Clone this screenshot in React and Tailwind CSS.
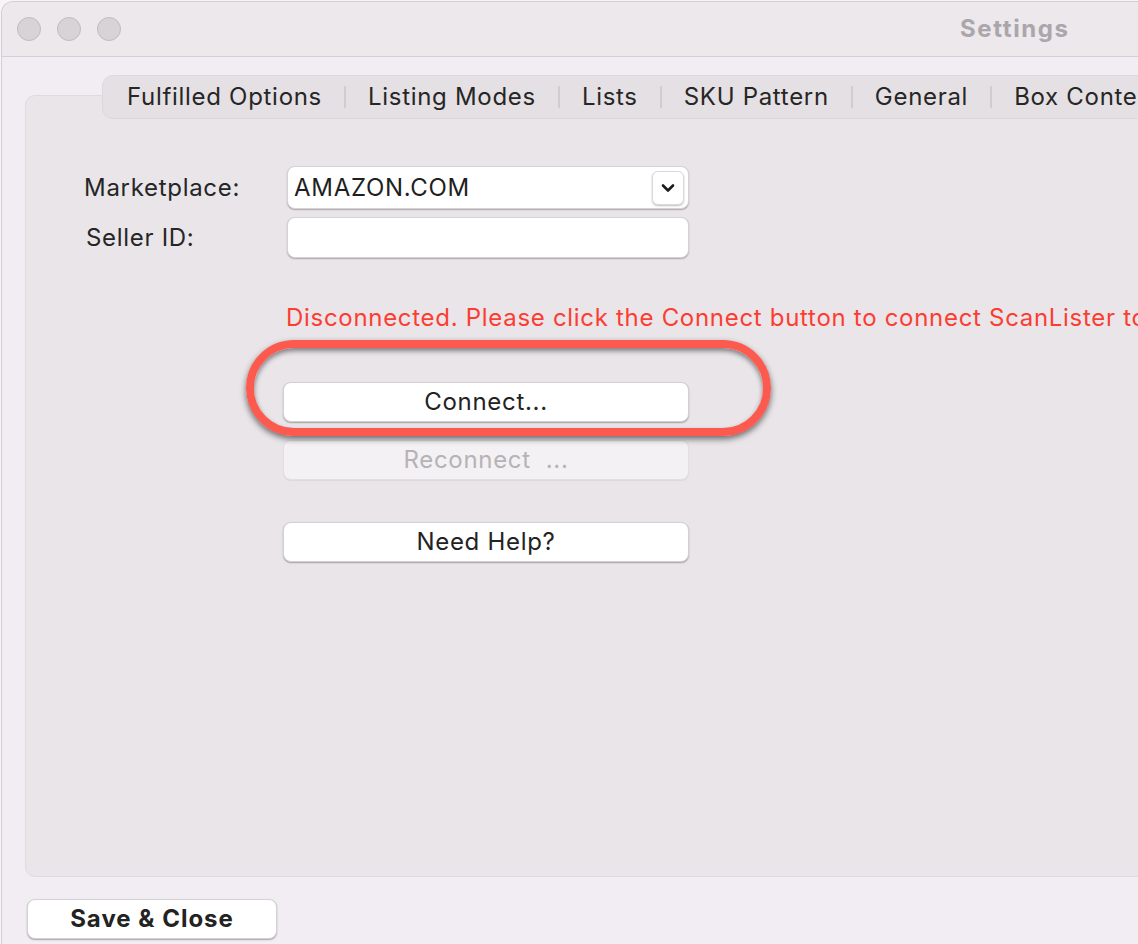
const tabs = ['Fulfilled Options', 'Listing Modes', 'Lists', 'SKU Pattern', 'General', 'Box Contents'];

const font = { fontFamily: 'Inter, "Noto Sans", sans-serif' };

const MacButton = ({ children, disabled, bold, className = '' }) => (
  <button
    className={`flex h-[40px] items-center justify-center rounded-[8px] border-[0.5px] text-[24px] ${
      disabled
        ? 'border-[#e2dfe2] bg-[#f3f1f3] text-[#b6b3b6] shadow-[0_1px_1px_rgba(0,0,0,0.06)]'
        : 'border-[#d4d1d4] bg-white text-[#232323] shadow-[0_1px_1.5px_rgba(0,0,0,0.3)]'
    } ${bold ? 'font-bold tracking-[1px]' : ''} ${className}`}
  >
    {children}
  </button>
);

const Chevron = () => (
  <svg width="14" height="10" viewBox="0 0 14 10" fill="none">
    <path d="M2 2.5 L7 7.5 L12 2.5" stroke="#1d1d1d" strokeWidth="2.6" strokeLinecap="round" strokeLinejoin="round" />
  </svg>
);

export default function App() {
  return (
    <div className="h-[944px] w-[1138px] overflow-hidden bg-[#f7f5f7] tracking-[0.7px]" style={font}>
      <div className="ml-[1px] mt-[1px] h-[960px] w-[1300px] rounded-tl-[12px] border-l border-t border-[#d2ced2] bg-[#f1edf2]">
        {/* title bar */}
        <div className="flex h-[55px] items-center rounded-tl-[12px] border-b border-[#d4d0d4] bg-[#ece8ec] pl-[15px]">
          <div className="flex gap-[16px]">
            <span className="h-[24px] w-[24px] rounded-full border border-[#bfbbbf] bg-[#d7d3d7]" />
            <span className="h-[24px] w-[24px] rounded-full border border-[#bfbbbf] bg-[#d7d3d7]" />
            <span className="h-[24px] w-[24px] rounded-full border border-[#bfbbbf] bg-[#d7d3d7]" />
          </div>
          <span className="ml-[839px] text-[24px] font-bold tracking-[1.6px] text-[#aaa6ab]">Settings</span>
        </div>

        <div className="flex flex-col pl-[23px] pt-[18px]">
          {/* tab strip */}
          <div className="relative z-10 ml-[77px] flex h-[44px] w-[1200px] items-center rounded-l-[11px] border border-[#dcd8dc] bg-[#e4e0e4] pl-[2px] text-[24px] text-[#262626]">
            {tabs.map((t, i) => (
              <div key={t} className="flex items-center">
                {i > 0 && <span className="h-[22px] w-[2px] bg-[#d0ccd0]" />}
                <span className="px-[22px] whitespace-nowrap">{t}</span>
              </div>
            ))}
          </div>

          {/* tab panel */}
          <div className="-mt-[24px] h-[782px] w-[1200px] rounded-[10px] border border-[#dedade] bg-[#e9e5e9] pl-[58px] pt-[70px]">
            <div className="flex flex-col gap-[8px]">
              <div className="flex items-center">
                <span className="w-[203px] text-[24px] text-[#262626]">Marketplace:</span>
                <div className="flex h-[43px] w-[402px] items-center justify-between rounded-[8px] border-[0.5px] border-[#d6d3d6] bg-white pl-[6px] pr-[4px] shadow-[0_1px_1.5px_rgba(0,0,0,0.28)]">
                  <span className="text-[24px] text-[#1f1f1f]">AMAZON.COM</span>
                  <span className="flex h-[34px] w-[32px] items-center justify-center rounded-[6px] border-[0.5px] border-[#dcd9dc] bg-white shadow-[0_1px_2px_rgba(0,0,0,0.25)]">
                    <Chevron />
                  </span>
                </div>
              </div>
              <div className="flex items-center">
                <span className="w-[203px] pl-[2px] text-[24px] text-[#262626]">Seller ID:</span>
                <div className="h-[41px] w-[402px] rounded-[8px] border-[0.5px] border-[#d6d3d6] bg-white shadow-[0_1px_1.5px_rgba(0,0,0,0.28)]" />
              </div>
            </div>

            <p className="mt-[45px] whitespace-nowrap pl-[202px] text-[24px] leading-[30px] text-[#fb3d32]">
              Disconnected. Please click the Connect button to connect ScanLister to your Amazon seller account.
            </p>

            <div className="ml-[199px] mt-[49px] flex w-[406px] flex-col">
              <div className="relative">
                <MacButton className="w-[406px]">Connect...</MacButton>
                {/* highlight ring */}
                <div className="pointer-events-none absolute left-[-37px] top-[-42px] h-[96px] w-[525px] rounded-full border-[8px] border-[#fc5a4e] shadow-[0_3px_6px_rgba(0,0,0,0.55),inset_0_3px_5px_rgba(0,0,0,0.45)]" />
              </div>
              <MacButton disabled className="mt-[18px] h-[38px] w-[406px]">Reconnect&nbsp; ...</MacButton>
              <MacButton className="mt-[42px] w-[406px]">Need Help?</MacButton>
            </div>
          </div>

          <div className="mt-[22px] pl-[2px]">
            <MacButton bold className="w-[250px]">Save &amp; Close</MacButton>
          </div>
        </div>
      </div>
    </div>
  );
}
